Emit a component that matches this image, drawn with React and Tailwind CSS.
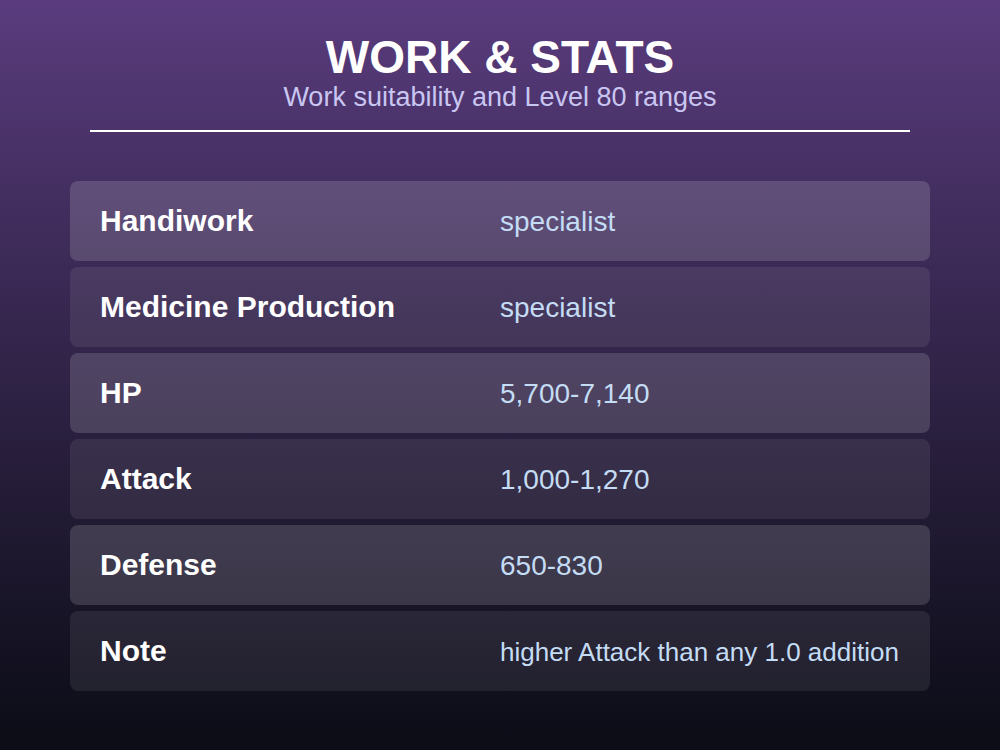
export default function App() {
  const rows = [
    ["Handiwork", "specialist", "text-[28px]"],
    ["Medicine Production", "specialist", "text-[28px]"],
    ["HP", "5,700-7,140", "text-[28px]"],
    ["Attack", "1,000-1,270", "text-[28px]"],
    ["Defense", "650-830", "text-[28px]"],
    ["Note", "higher Attack than any 1.0 addition", "text-[26px]"],
  ];
  return (
    <div
      className="w-[1000px] h-[750px] bg-gradient-to-b from-[#5a3c7e] to-[#0b0c16] flex flex-col items-center"
      style={{ fontFamily: '"Liberation Sans", Arial, sans-serif' }}
    >
      <h1 className="mt-[31px] text-[46px] leading-[52px] font-bold text-white">WORK &amp; STATS</h1>
      <p className="text-[27px] leading-[28px] text-[#c9c6f2]">Work suitability and Level 80 ranges</p>
      <div className="mt-[19px] w-[820px] h-[2px] bg-white" />
      <div className="mt-[49px] w-[860px] flex flex-col gap-[6px]">
        {rows.map(([k, v, size], i) => (
          <div
            key={k}
            className={`h-[80px] rounded-[8px] px-[30px] grid grid-cols-2 items-center ${
              i % 2 === 0 ? "bg-white/[0.15]" : "bg-white/[0.08]"
            }`}
          >
            <span className="text-[30px] leading-[34px] font-bold text-white">{k}</span>
            <span className={`${size} leading-[34px] pt-[2px] text-[#c4dcf4] whitespace-nowrap`}>{v}</span>
          </div>
        ))}
      </div>
    </div>
  );
}
